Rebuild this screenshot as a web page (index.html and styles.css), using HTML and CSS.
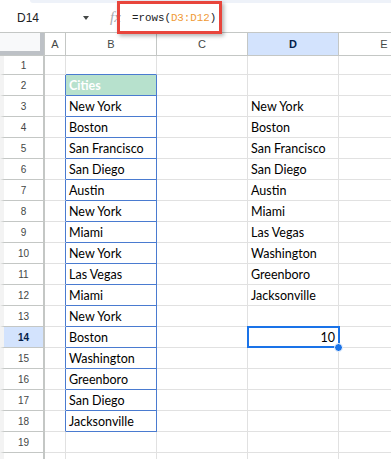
FILE: index.html
```html
<!DOCTYPE html>
<html lang="en">
<head>
<meta charset="UTF-8">
<title>rows(D3:D12)</title>
<link rel="stylesheet" href="styles.css">
</head>
<body>

<div class="strip"></div>
<div class="formula-bar">
  <div class="name-box">
    <span class="name">D14</span>
    <span class="caret"></span>
  </div>
  <span class="fx">fx</span>
  <span class="formula">=rows(<span class="ref">D3:D12</span>)</span>
  <div class="callout"></div>
</div>

<div class="sheet">
  <div class="corner"></div>
  <div class="col-hd">A</div>
  <div class="col-hd">B</div>
  <div class="col-hd">C</div>
  <div class="col-hd sel">D</div>
  <div class="col-hd">E</div>

  <div class="row-hd">1</div><div class="c"></div><div class="c b-top"></div><div class="c"></div><div class="c"></div><div class="c"></div>
  <div class="row-hd">2</div><div class="c a-edge"></div><div class="c city title">Cities</div><div class="c"></div><div class="c"></div><div class="c"></div>
  <div class="row-hd">3</div><div class="c a-edge"></div><div class="c city">New York</div><div class="c"></div><div class="c">New York</div><div class="c"></div>
  <div class="row-hd">4</div><div class="c a-edge"></div><div class="c city">Boston</div><div class="c"></div><div class="c">Boston</div><div class="c"></div>
  <div class="row-hd">5</div><div class="c a-edge"></div><div class="c city">San Francisco</div><div class="c"></div><div class="c">San Francisco</div><div class="c"></div>
  <div class="row-hd">6</div><div class="c a-edge"></div><div class="c city">San Diego</div><div class="c"></div><div class="c">San Diego</div><div class="c"></div>
  <div class="row-hd">7</div><div class="c a-edge"></div><div class="c city">Austin</div><div class="c"></div><div class="c">Austin</div><div class="c"></div>
  <div class="row-hd">8</div><div class="c a-edge"></div><div class="c city">New York</div><div class="c"></div><div class="c">Miami</div><div class="c"></div>
  <div class="row-hd">9</div><div class="c a-edge"></div><div class="c city">Miami</div><div class="c"></div><div class="c">Las Vegas</div><div class="c"></div>
  <div class="row-hd">10</div><div class="c a-edge"></div><div class="c city">New York</div><div class="c"></div><div class="c">Washington</div><div class="c"></div>
  <div class="row-hd">11</div><div class="c a-edge"></div><div class="c city">Las Vegas</div><div class="c"></div><div class="c">Greenboro</div><div class="c"></div>
  <div class="row-hd">12</div><div class="c a-edge"></div><div class="c city">Miami</div><div class="c"></div><div class="c">Jacksonville</div><div class="c"></div>
  <div class="row-hd">13</div><div class="c a-edge"></div><div class="c city">New York</div><div class="c"></div><div class="c"></div><div class="c"></div>
  <div class="row-hd sel">14</div><div class="c a-edge"></div><div class="c city">Boston</div><div class="c"></div><div class="c num active">10<span class="handle"></span></div><div class="c"></div>
  <div class="row-hd">15</div><div class="c a-edge"></div><div class="c city">Washington</div><div class="c"></div><div class="c"></div><div class="c"></div>
  <div class="row-hd">16</div><div class="c a-edge"></div><div class="c city">Greenboro</div><div class="c"></div><div class="c"></div><div class="c"></div>
  <div class="row-hd">17</div><div class="c a-edge"></div><div class="c city">San Diego</div><div class="c"></div><div class="c"></div><div class="c"></div>
  <div class="row-hd">18</div><div class="c a-edge"></div><div class="c city">Jacksonville</div><div class="c"></div><div class="c"></div><div class="c"></div>
  <div class="row-hd">19</div><div class="c"></div><div class="c"></div><div class="c"></div><div class="c"></div><div class="c"></div>
  <div class="row-hd">20</div><div class="c"></div><div class="c"></div><div class="c"></div><div class="c"></div><div class="c"></div>
</div>

</body>
</html>
```

FILE: styles.css
```css
body {
  margin: 0;
  background: #fff;
  color: #000;
  font-family: 'Liberation Sans', Arial, sans-serif;
  overflow: hidden;
  width: 391px;
  height: 459px;
}

.strip {
  height: 3px;
  margin-left: 30px;
  background: #eef2f9;
  border-bottom-left-radius: 3px;
}

.formula-bar {
  position: relative;
  display: flex;
  align-items: center;
  height: 29px;
  border-bottom: 1px solid #c4c7c5;
}

.name-box {
  display: flex;
  align-items: center;
  width: 100px;
  padding-left: 17px;
  box-sizing: border-box;
}

.name {
  flex: 1;
  font-size: 12px;
  color: #202124;
}

.caret {
  width: 0;
  height: 0;
  border-left: 3.5px solid transparent;
  border-right: 3.5px solid transparent;
  border-top: 4px solid #444746;
  margin-right: 11px;
}

.fx {
  width: 22px;
  margin-left: 10px;
  font-family: 'Liberation Serif', serif;
  font-style: italic;
  font-size: 15px;
  color: #a8abaf;
}

.formula {
  font-family: 'Liberation Mono', monospace;
  font-size: 10.8px;
  color: #202124;
}

.ref {
  color: #f09a36;
}

.callout {
  position: absolute;
  left: 117px;
  top: -2px;
  width: 105px;
  height: 33px;
  box-sizing: border-box;
  border: 3px solid #e8453c;
  box-shadow: 2px 2px 4px rgba(0, 0, 0, 0.3);
  z-index: 2;
}

/* grid */
.sheet {
  display: grid;
  grid-template-columns: 45px 21px 91px 91px 91px 91px;
  grid-template-rows: 23px 19px repeat(19, 21px);
}

.sheet > div {
  box-sizing: border-box;
  border-right: 1px solid #e1e1e1;
  border-bottom: 1px solid #e1e1e1;
}

.corner {
  background: #f8f9fa;
  box-shadow: inset -4px -4px 0 #bdc1c6;
  border-color: #c4c7c5 !important;
}

.col-hd {
  display: flex;
  align-items: center;
  justify-content: center;
  font-size: 11px;
  color: #444746;
  border-color: #c4c7c5 !important;
}

.row-hd {
  display: flex;
  align-items: center;
  justify-content: center;
  font-size: 10px;
  color: #444746;
  border-left: 4px solid #f3f3f3;
  border-right: 2px solid #c4c7c5 !important;
  border-bottom-color: #c4c7c5 !important;
}

.sel {
  background: #d3e3fd;
  color: #041e49;
  font-weight: bold;
}

.c {
  display: flex;
  align-items: center;
  padding: 1px 3px 0;
  font-family: Lato, 'Open Sans', sans-serif;
  font-size: 12.5px;
  line-height: 15px;
  white-space: nowrap;
}

.b-top {
  border-bottom-color: #4a7bd0 !important;
}

.a-edge {
  border-right-color: #4a7bd0 !important;
}

.city {
  border-right-color: #4a7bd0 !important;
  border-bottom-color: #4a7bd0 !important;
}

.title {
  background: #b7e1cd;
  color: #fff;
  font-weight: bold;
}

.num {
  justify-content: flex-end;
}

.active {
  position: relative;
}

.active::after {
  content: "";
  position: absolute;
  top: -1px;
  left: -1px;
  right: -2px;
  bottom: -1px;
  border: 2px solid #1a73e8;
}

.handle {
  position: absolute;
  right: -5px;
  bottom: -5px;
  width: 7px;
  height: 7px;
  border-radius: 50%;
  background: #1a73e8;
  border: 1px solid #fff;
  z-index: 1;
}
```
